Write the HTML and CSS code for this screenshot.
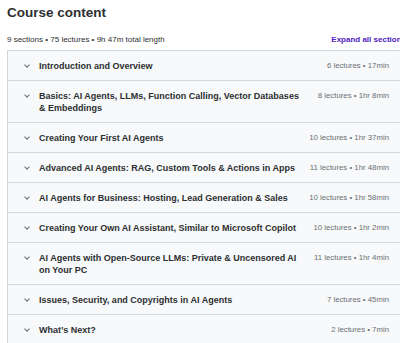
FILE: index.html
```html
<!DOCTYPE html>
<html lang="en">
<head>
    <meta charset="UTF-8">
    <meta name="viewport" content="width=device-width, initial-scale=1.0">
    <title>Course content</title>
    <link rel="stylesheet" href="styles.css">
</head>
<body>
    <div class="curriculum">
        <h2 class="curriculum-title">Course content</h2>
        <div class="curriculum-bar">
            <span class="curriculum-stats">9 sections • 75 lectures • 9h 47m total length</span>
            <button class="expand-btn">Expand all sections</button>
        </div>
        <div class="sections">
            <div class="section-row">
                <span class="chevron"></span>
                <span class="section-title">Introduction and Overview</span>
                <span class="section-meta">6 lectures • 17min</span>
            </div>
            <div class="section-row">
                <span class="chevron"></span>
                <span class="section-title">Basics: AI Agents, LLMs, Function Calling, Vector Databases &amp; Embeddings</span>
                <span class="section-meta">8 lectures • 1hr 8min</span>
            </div>
            <div class="section-row">
                <span class="chevron"></span>
                <span class="section-title">Creating Your First AI Agents</span>
                <span class="section-meta">10 lectures • 1hr 37min</span>
            </div>
            <div class="section-row">
                <span class="chevron"></span>
                <span class="section-title">Advanced AI Agents: RAG, Custom Tools &amp; Actions in Apps</span>
                <span class="section-meta">11 lectures • 1hr 48min</span>
            </div>
            <div class="section-row">
                <span class="chevron"></span>
                <span class="section-title">AI Agents for Business: Hosting, Lead Generation &amp; Sales</span>
                <span class="section-meta">10 lectures • 1hr 58min</span>
            </div>
            <div class="section-row">
                <span class="chevron"></span>
                <span class="section-title">Creating Your Own AI Assistant, Similar to Microsoft Copilot</span>
                <span class="section-meta">10 lectures • 1hr 2min</span>
            </div>
            <div class="section-row">
                <span class="chevron"></span>
                <span class="section-title">AI Agents with Open-Source LLMs: Private &amp; Uncensored AI on Your PC</span>
                <span class="section-meta">11 lectures • 1hr 4min</span>
            </div>
            <div class="section-row">
                <span class="chevron"></span>
                <span class="section-title">Issues, Security, and Copyrights in AI Agents</span>
                <span class="section-meta">7 lectures • 45min</span>
            </div>
            <div class="section-row">
                <span class="chevron"></span>
                <span class="section-title">What’s Next?</span>
                <span class="section-meta">2 lectures • 7min</span>
            </div>
        </div>
    </div>
</body>
</html>
```

FILE: styles.css
```css
html, body {
    overflow: hidden;
}
body {
    margin: 0;
    padding: 0;
    background-color: #fff;
    color: #2d2f31;
    font-family: 'Liberation Sans', Arial, sans-serif;
}
.curriculum {
    width: 405px;
    padding: 4px 0 0 7px;
}
.curriculum-title {
    margin: 0;
    font-size: 13.5px;
    line-height: 17px;
    font-weight: 700;
}
.curriculum-bar {
    display: flex;
    justify-content: space-between;
    align-items: center;
    margin-top: 12px;
    height: 12px;
    padding-bottom: 5px;
}
.curriculum-stats {
    font-size: 8px;
}
.expand-btn {
    background: none;
    border: none;
    padding: 0 6px 0 0;
    color: #5022c3;
    font-family: inherit;
    font-weight: 700;
    font-size: 8px;
    cursor: pointer;
}
.sections {
    border: 1px solid #d1d7dc;
    border-bottom: none;
}
.section-row {
    display: flex;
    align-items: center;
    gap: 12px;
    padding: 9px 22px 8px 17px;
    background-color: #f7f9fa;
    border-bottom: 1px solid #d1d7dc;
}
.chevron {
    flex: none;
    width: 3px;
    height: 3px;
    margin-right: -2px;
    border-right: 1px solid #6a6f73;
    border-bottom: 1px solid #6a6f73;
    transform: rotate(45deg);
    align-self: flex-start;
    margin-top: 3px;
}
.section-title {
    flex: 1;
    font-size: 9px;
    line-height: 12px;
    font-weight: 700;
}
.section-meta {
    flex: none;
    font-size: 7.8px;
    color: #6a6f73;
    align-self: flex-start;
    line-height: 12px;
}
```
